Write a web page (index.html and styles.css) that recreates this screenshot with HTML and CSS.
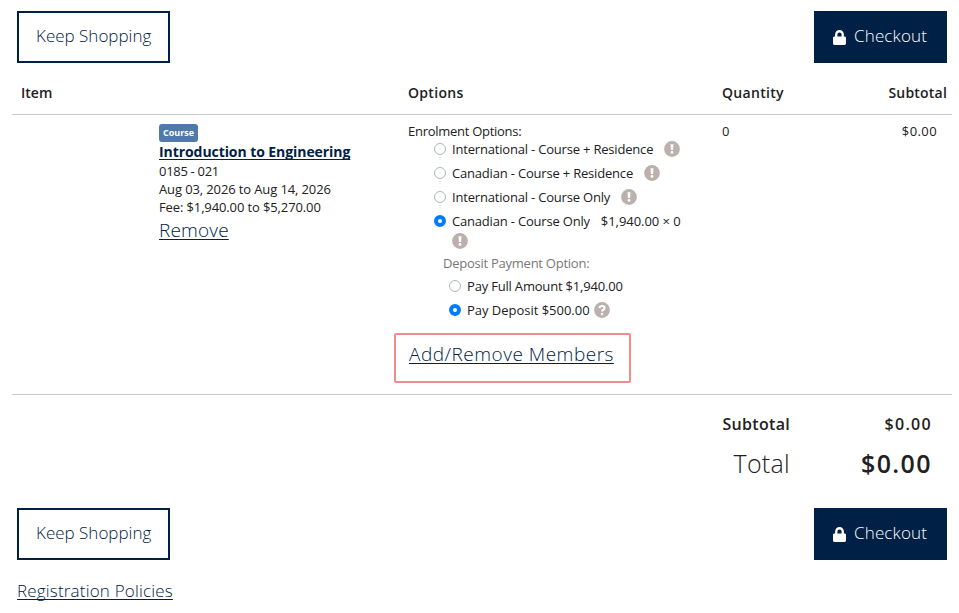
FILE: index.html
```html
<!DOCTYPE html>
<html lang="en">
<head>
    <meta charset="UTF-8">
    <meta name="viewport" content="width=device-width, initial-scale=1.0">
    <title>Shopping Cart</title>
    <link rel="stylesheet" href="styles.css">
</head>
<body>
    <!-- Shared icons -->
    <svg class="sprite" width="0" height="0">
        <symbol id="lock" viewBox="0 0 448 512">
            <path d="M400 224h-24v-72C376 68.2 307.800 0 224 0S72 68.200 72 152v72H48c-26.500 0-48 21.500-48 48v192c0 26.500 21.500 48 48 48h352c26.500 0 48-21.500 48-48V272c0-26.500-21.500-48-48-48zm-104 0H152v-72c0-39.700 32.300-72 72-72s72 32.300 72 72v72z"/>
        </symbol>
        <symbol id="info" viewBox="0 0 16 16">
            <circle cx="8" cy="8" r="7.900" fill="#bbb0ab"/>
            <path d="M6.500 3.300h3l-.4 5.700H6.900z" fill="#fff"/>
            <circle cx="8" cy="11.400" r="1.400" fill="#fff"/>
        </symbol>
        <symbol id="help" viewBox="0 0 16 16">
            <circle cx="8" cy="8" r="7.900" fill="#bbb0ab"/>
            <path d="M5.400 6.100C5.600 4.600 6.600 4 8 4c1.500 0 2.600.8 2.600 2.100C10.600 7.800 8 7.700 8 9.500" fill="none" stroke="#fff" stroke-width="2.100"/>
            <circle cx="8" cy="12" r="1.300" fill="#fff"/>
        </symbol>
    </svg>

    <div class="cart">
        <div class="actions">
            <a class="btn btn-outline">Keep Shopping</a>
            <a class="btn btn-primary"><svg class="lock"><use href="#lock"/></svg>Checkout</a>
        </div>

        <div class="cart-row cart-head">
            <div class="head-item">Item</div>
            <div class="head-options">Options</div>
            <div class="head-quantity">Quantity</div>
            <div class="head-subtotal">Subtotal</div>
        </div>

        <div class="cart-row cart-line">
            <div class="item">
                <span class="badge">Course</span>
                <a class="item-title">Introduction to Engineering</a>
                <span class="item-code">0185 - 021</span>
                <span class="item-dates">Aug 03, 2026 to Aug 14, 2026</span>
                <span class="item-fee">Fee: $1,940.00 to $5,270.00</span>
                <a class="remove">Remove</a>
            </div>

            <div class="options">
                <div class="options-label">Enrolment Options:</div>
                <label class="option"><input type="radio" name="enrol">International - Course + Residence<svg class="icon"><use href="#info"/></svg></label>
                <label class="option"><input type="radio" name="enrol">Canadian - Course + Residence<svg class="icon"><use href="#info"/></svg></label>
                <label class="option"><input type="radio" name="enrol">International - Course Only<svg class="icon"><use href="#info"/></svg></label>
                <label class="option"><input type="radio" name="enrol" checked>Canadian - Course Only<span class="price">$1,940.00 × 0</span></label>
                <div class="option-info"><svg class="icon"><use href="#info"/></svg></div>
                <div class="deposit">
                    <div class="deposit-label">Deposit Payment Option:</div>
                    <label class="option"><input type="radio" name="pay">Pay Full Amount $1,940.00</label>
                    <label class="option pay-deposit"><input type="radio" name="pay" checked>Pay Deposit $500.00<svg class="icon"><use href="#help"/></svg></label>
                </div>
                <div class="members"><a>Add/Remove Members</a></div>
            </div>

            <div class="quantity">0</div>
            <div class="amount">$0.00</div>
        </div>

        <div class="totals">
            <div class="totals-row"><span class="sub-label">Subtotal</span><span class="sub-value">$0.00</span></div>
            <div class="totals-row grand"><span class="total-label">Total</span><span class="total-value">$0.00</span></div>
        </div>

        <div class="actions">
            <a class="btn btn-outline">Keep Shopping</a>
            <a class="btn btn-primary"><svg class="lock"><use href="#lock"/></svg>Checkout</a>
        </div>

        <a class="policies">Registration Policies</a>
    </div>
</body>
</html>
```
FILE: styles.css
```css
:root {
    --navy: #002145;
    --text: #212121;
    --line: #c9c9c9;
    --blue: #007bff;
}

* {
    margin: 0;
    padding: 0;
    box-sizing: border-box;
}

body {
    background: #fff;
    color: var(--text);
    font-family: "Open Sans", "Noto Sans", sans-serif;
    font-size: 13px;
    line-height: 18px;
    font-weight: 400;
    white-space: nowrap;
}

a {
    color: var(--navy);
    text-decoration: none;
}

.item-title,
.remove,
.members a,
.policies {
    text-decoration: underline 1px;
    text-decoration-skip-ink: none;
    text-underline-offset: 2px;
}

.sprite {
    position: absolute;
}

.cart {
    width: 940px;
    margin-left: 12px;
    padding-top: 11px;
}

.actions {
    display: flex;
    justify-content: space-between;
    padding: 0 5px;
}

.btn {
    display: flex;
    align-items: center;
    height: 52px;
    padding: 0 0 2px 17px;
    border: 2px solid var(--navy);
    font-size: 17px;
    font-weight: 300;
}

.btn-outline {
    width: 153px;
}

.btn-primary {
    width: 133px;
    background: var(--navy);
    color: #fff;
    letter-spacing: 0.15px;
}

.lock {
    width: 13px;
    height: 15px;
    margin: 2px 8px 0 0;
    fill: #fff;
}

/* Cart table */
.cart-row {
    display: grid;
    grid-template-columns: 396px 314px 80px 1fr;
    border-bottom: 1px solid var(--line);
}

.cart-head {
    height: 52px;
    padding-top: 21px;
    font-size: 14px;
    font-weight: 600;
}

.head-item {
    padding-left: 9px;
}

.head-options,
.head-quantity {
    letter-spacing: 0.3px;
}

.head-subtotal {
    text-align: right;
    padding-right: 5px;
    letter-spacing: 0.2px;
}

.cart-line {
    height: 280px;
    padding-top: 8px;
}

.item {
    display: flex;
    flex-direction: column;
    align-items: flex-start;
    padding: 1px 0 0 147px;
}

.badge {
    width: 39px;
    height: 18px;
    border-radius: 3px;
    background: #4f7aa9;
    color: #fff;
    font-size: 9px;
    font-weight: 700;
    text-align: center;
}

.item-title {
    height: 20px;
    font-size: 14px;
    line-height: 20px;
    font-weight: 700;
    letter-spacing: -0.07px;
}

.item-code {
    letter-spacing: -0.3px;
}

.item-dates,
.item-fee {
    letter-spacing: -0.12px;
}

.remove {
    font-size: 19px;
    line-height: 28px;
    font-weight: 300;
    letter-spacing: 0.15px;
}

.options {
    margin-top: -1px;
    letter-spacing: -0.19px;
}

.options-label {
    letter-spacing: -0.28px;
}

.option {
    display: flex;
    align-items: center;
    height: 24px;
    padding-left: 26px;
}

.options-label + .option {
    margin-top: -3px;
}

input {
    appearance: none;
    flex: none;
    width: 12px;
    height: 12px;
    margin-right: 6px;
    border: 1px solid #adb5bd;
    border-radius: 50%;
    background: #fff;
}

input:checked {
    border: 4px solid var(--blue);
}

.icon {
    flex: none;
    width: 16px;
    height: 16px;
    margin-left: 11px;
}

.price {
    margin-left: 11px;
    letter-spacing: -0.05px;
}

.option-info {
    display: flex;
    height: 16px;
    padding-left: 33px;
}

.deposit {
    padding: 5px 0 0 35px;
}

.deposit-label {
    margin-bottom: 2px;
    color: #777;
    letter-spacing: -0.25px;
}

.deposit .option {
    padding-left: 6px;
}

.pay-deposit {
    letter-spacing: -0.02px;
}

.deposit .icon {
    margin-left: 4px;
}

.members {
    width: 237px;
    height: 50px;
    margin: 11px 0 0 -14px;
    padding: 6px 0 0 13px;
    border: 2px solid #f48b8b;
    border-radius: 2px;
    font-size: 19px;
    line-height: 26px;
    font-weight: 300;
    letter-spacing: 0.5px;
}

.quantity {
    margin-top: -1px;
}

.amount {
    margin-top: -1px;
    text-align: right;
    padding-right: 15px;
    letter-spacing: 0.4px;
}

/* Totals */
.totals {
    height: 113px;
    padding: 18px 20px 0 0;
}

.totals-row {
    display: flex;
    justify-content: flex-end;
    height: 22px;
    font-size: 16px;
    line-height: 22px;
    font-weight: 600;
    letter-spacing: 0.3px;
}

.sub-value,
.total-value {
    width: 142px;
    text-align: right;
}

.sub-value {
    letter-spacing: 1.3px;
}

.grand {
    margin-top: 12px;
    height: 32px;
    font-size: 25px;
    line-height: 32px;
}

.total-value {
    letter-spacing: 1.4px;
}

.total-label {
    font-weight: 300;
}

.policies {
    display: inline-block;
    margin: 19px 0 0 5px;
    font-size: 17px;
    line-height: 24px;
    font-weight: 300;
    letter-spacing: 0.18px;
}
```
